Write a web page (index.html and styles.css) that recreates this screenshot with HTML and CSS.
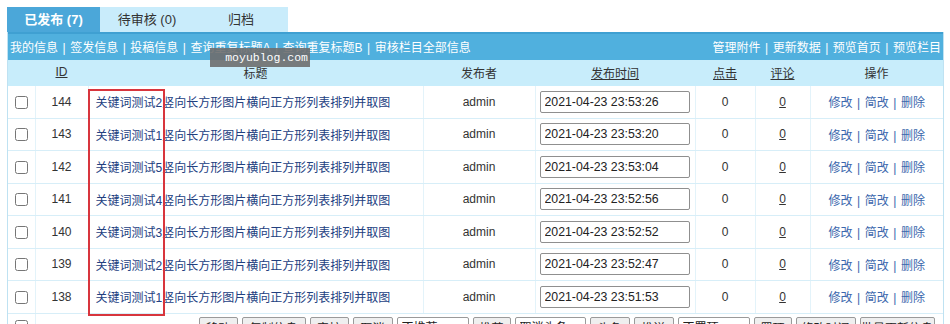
FILE: index.html
```html
<!DOCTYPE html>
<html lang="zh-CN">
<head>
<meta charset="utf-8">
<title>信息列表</title>
<link rel="stylesheet" href="styles.css">
</head>
<body>
<div class="page">
  <div class="tabs">
    <div class="tab active">已发布 (7)</div>
    <div class="tab">待审核 (0)</div>
    <div class="tab">归档</div>
  </div>
  <div class="panel">
    <div class="toolbar">
      <div class="tl">
        <a>我的信息</a><span class="sep">|</span><a>签发信息</a><span class="sep">|</span><a>投稿信息</a><span class="sep">|</span><a>查询重复标题A</a><span class="sep">|</span><a>查询重复标题B</a><span class="sep">|</span><a>审核栏目全部信息</a>
      </div>
      <div class="tr">
        <a>管理附件</a><span class="sep">|</span><a>更新数据</a><span class="sep">|</span><a>预览首页</a><span class="sep">|</span><a>预览栏目</a>
      </div>
    </div>
    <table class="list">
      <colgroup>
        <col class="c-chk"><col class="c-id"><col class="c-title"><col class="c-user"><col class="c-time"><col class="c-hit"><col class="c-cmt"><col class="c-op">
      </colgroup>
      <thead>
        <tr>
          <th></th>
          <th><a class="u">ID</a></th>
          <th>标题</th>
          <th>发布者</th>
          <th><a class="u">发布时间</a></th>
          <th><a class="u">点击</a></th>
          <th><a class="u">评论</a></th>
          <th>操作</th>
        </tr>
      </thead>
      <tbody>
        <tr><td><input type="checkbox"></td><td class="num">144</td><td class="title"><a>关键词测试2竖向长方形图片横向正方形列表排列并取图</a></td><td>admin</td><td><input class="time" type="text" value="2021-04-23 23:53:26"></td><td>0</td><td><a class="u">0</a></td><td class="op"><a>修改</a><span class="sep">|</span><a>简改</a><span class="sep">|</span><a>删除</a></td></tr>
        <tr><td><input type="checkbox"></td><td class="num">143</td><td class="title"><a>关键词测试1竖向长方形图片横向正方形列表排列并取图</a></td><td>admin</td><td><input class="time" type="text" value="2021-04-23 23:53:20"></td><td>0</td><td><a class="u">0</a></td><td class="op"><a>修改</a><span class="sep">|</span><a>简改</a><span class="sep">|</span><a>删除</a></td></tr>
        <tr><td><input type="checkbox"></td><td class="num">142</td><td class="title"><a>关键词测试5竖向长方形图片横向正方形列表排列并取图</a></td><td>admin</td><td><input class="time" type="text" value="2021-04-23 23:53:04"></td><td>0</td><td><a class="u">0</a></td><td class="op"><a>修改</a><span class="sep">|</span><a>简改</a><span class="sep">|</span><a>删除</a></td></tr>
        <tr><td><input type="checkbox"></td><td class="num">141</td><td class="title"><a>关键词测试4竖向长方形图片横向正方形列表排列并取图</a></td><td>admin</td><td><input class="time" type="text" value="2021-04-23 23:52:56"></td><td>0</td><td><a class="u">0</a></td><td class="op"><a>修改</a><span class="sep">|</span><a>简改</a><span class="sep">|</span><a>删除</a></td></tr>
        <tr><td><input type="checkbox"></td><td class="num">140</td><td class="title"><a>关键词测试3竖向长方形图片横向正方形列表排列并取图</a></td><td>admin</td><td><input class="time" type="text" value="2021-04-23 23:52:52"></td><td>0</td><td><a class="u">0</a></td><td class="op"><a>修改</a><span class="sep">|</span><a>简改</a><span class="sep">|</span><a>删除</a></td></tr>
        <tr><td><input type="checkbox"></td><td class="num">139</td><td class="title"><a>关键词测试2竖向长方形图片横向正方形列表排列并取图</a></td><td>admin</td><td><input class="time" type="text" value="2021-04-23 23:52:47"></td><td>0</td><td><a class="u">0</a></td><td class="op"><a>修改</a><span class="sep">|</span><a>简改</a><span class="sep">|</span><a>删除</a></td></tr>
        <tr><td><input type="checkbox"></td><td class="num">138</td><td class="title"><a>关键词测试1竖向长方形图片横向正方形列表排列并取图</a></td><td>admin</td><td><input class="time" type="text" value="2021-04-23 23:51:53"></td><td>0</td><td><a class="u">0</a></td><td class="op"><a>修改</a><span class="sep">|</span><a>简改</a><span class="sep">|</span><a>删除</a></td></tr>
        <tr class="actions">
          <td><input type="checkbox"></td>
          <td colspan="7">
            <div class="btns">
              <button class="b w39">移动</button>
              <button class="b w64">复制信息</button>
              <button class="b w39">审核</button>
              <button class="b w40">取消</button>
              <select class="s w72"><option>不推荐</option></select>
              <button class="b w38">推荐</button>
              <select class="s w71"><option>取消头条</option></select>
              <button class="b w40">头条</button>
              <button class="b w40">推送</button>
              <select class="s w72"><option>不置顶</option></select>
              <button class="b w38">置顶</button>
              <button class="b w60">修改时间</button>
              <button class="b w75">批量更新信息</button>
            </div>
          </td>
        </tr>
      </tbody>
    </table>
  </div>
  <div class="watermark">moyublog.com</div>
  <div class="redbox"></div>
</div>
</body>
</html>
```
FILE: styles.css
```css
html, body {
  margin: 0;
  padding: 0;
  background: #fff;
}
body {
  font-family: "Liberation Sans", "Noto Sans CJK SC", sans-serif;
  font-size: 12px;
  color: #333;
  overflow: hidden;
}
.page {
  position: relative;
  padding: 7px 0 0 7px;
  width: 937px;
}
.tabs {
  display: flex;
  height: 25px;
}
.tab {
  width: 94px;
  height: 25px;
  line-height: 25px;
  text-align: center;
  font-size: 13px;
  background: #c9ecfb;
  color: #333;
}
.tab.active {
  width: 93px;
  background: #4ba7d9;
  color: #fff;
  font-weight: bold;
}
.panel {
  border-left: 1px solid #bfe2f2;
  border-right: 1px solid #bfe2f2;
}
.toolbar {
  display: flex;
  justify-content: space-between;
  align-items: center;
  height: 25px;
  padding: 0 2px 1px;
  background: #50b0de;
  border-top: 2px solid #3fa0d2;
  color: #fff;
}
.toolbar a {
  color: #fff;
  text-decoration: none;
}
.sep {
  display: inline-block;
  margin: 0 4.5px;
}
.list {
  width: 100%;
  border-collapse: collapse;
  table-layout: fixed;
}
.c-chk { width: 27px; }
.c-id { width: 53px; }
.c-title { width: 335px; }
.c-user { width: 112px; }
.c-time { width: 160px; }
.c-hit { width: 60px; }
.c-cmt { width: 55px; }
.c-op { width: 133px; }
.list th {
  height: 26px;
  padding: 0 0 2px;
  background: #c8edfb;
  font-weight: normal;
  color: #333;
  text-align: center;
  box-sizing: border-box;
}
.list td {
  height: 31.5px;
  padding: 0;
  text-align: center;
  border-bottom: 1px solid #d7eef8;
  border-left: 1px solid #e3f3fa;
  color: #333;
}
.list td:first-child {
  border-left: none;
}
.list input[type="checkbox"] {
  width: 13px;
  height: 13px;
  margin: 0;
  vertical-align: middle;
}
.u {
  color: #333;
  text-decoration: underline;
}
.num {
  color: #2f3f5f;
}
.list td.title {
  text-align: left;
  padding-left: 7px;
  white-space: nowrap;
  overflow: hidden;
}
.title a {
  color: #22407f;
  text-decoration: none;
}
.time {
  box-sizing: border-box;
  width: 150px;
  height: 22px;
  margin: 0 0 0 -1px;
  padding: 0 4px;
  border: 1px solid #8f8f8f;
  border-radius: 2px;
  font-family: "Liberation Sans", sans-serif;
  font-size: 12.3px;
  color: #222;
  vertical-align: middle;
}
.op a {
  color: #3b67ad;
}
.op .sep {
  color: #3b67ad;
  margin: 0 4.5px;
}
.actions td {
  height: 22px;
  vertical-align: top;
  border-bottom: none;
}
.actions td:first-child {
  padding-top: 5px;
}
.btns {
  display: flex;
  gap: 4px;
  padding: 3px 0 0 163px;
}
.b, .s {
  box-sizing: border-box;
  height: 22px;
  padding: 0;
  margin: 0;
  border: 1px solid #9a9a9a;
  border-radius: 2px;
  background: #efefef;
  font-family: "Liberation Sans", "Noto Sans CJK SC", sans-serif;
  font-size: 12px;
  color: #222;
}
.s {
  background: #fff;
}
.w38 { width: 38px; }
.w39 { width: 39px; }
.w40 { width: 40px; }
.w60 { width: 60px; }
.w64 { width: 64px; }
.w71 { width: 71px; }
.w72 { width: 72px; }
.w75 { width: 75px; }
.watermark {
  position: absolute;
  left: 210px;
  top: 48px;
  width: 100px;
  height: 19px;
  line-height: 19px;
  background: rgba(110, 110, 110, 0.9);
  color: #fff;
  font-family: "Liberation Mono", monospace;
  font-size: 11.5px;
  text-align: right;
  padding-right: 2px;
  box-sizing: border-box;
}
.redbox {
  position: absolute;
  left: 88px;
  top: 89px;
  width: 77px;
  height: 227px;
  box-sizing: border-box;
  border: 2px solid #d8353d;
}
```
